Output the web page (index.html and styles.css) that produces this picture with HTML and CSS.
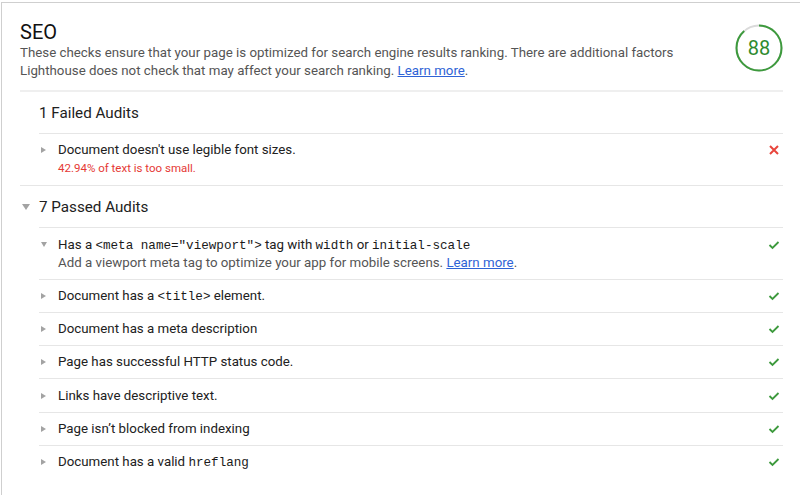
FILE: index.html
```html
<!DOCTYPE html>
<html>
<head>
<meta charset="utf-8">
<link rel="stylesheet" href="styles.css">
</head>
<body>
<div class="frame">
  <section class="category">
    <header class="cat-header">
      <div class="cat-text">
        <h1 class="cat-title">SEO</h1>
        <p class="cat-desc">These checks ensure that your page is optimized for search engine results ranking. There are additional factors Lighthouse does not check that may affect your search ranking. <a class="link" href="#">Learn more</a>.</p>
      </div>
      <div class="gauge">
        <svg class="gauge-svg" width="48" height="48" viewBox="0 0 48 48">
          <circle cx="24" cy="24" r="22.5" fill="none" stroke="#dadada" stroke-width="2"/>
          <circle cx="24" cy="24" r="22.5" fill="none" stroke="#3d9a3d" stroke-width="2" stroke-dasharray="124.4 200" transform="rotate(-90 24 24)"/>
        </svg>
        <span class="gauge-num">88</span>
      </div>
    </header>

    <div class="group">
      <div class="group-head"><span class="arrow-slot"></span><span class="group-title">1 Failed Audits</span></div>
      <div class="audits">
        <div class="audit">
          <span class="arrow-slot"><span class="tri-right"></span></span>
          <div class="audit-body">
            <div class="audit-title">Document doesn't use legible font sizes.</div>
            <div class="audit-fail">42.94% of text is too small.</div>
          </div>
          <svg class="icon" width="12" height="12" viewBox="0 0 12 12"><path d="M2 2 L10 10 M10 2 L2 10" stroke="#e8453c" stroke-width="2" fill="none"/></svg>
        </div>
      </div>
    </div>

    <div class="group">
      <div class="group-head"><span class="arrow-slot head-arrow"><span class="tri-down"></span></span><span class="group-title">7 Passed Audits</span></div>
      <div class="audits">
        <div class="audit">
          <span class="arrow-slot"><span class="tri-down small"></span></span>
          <div class="audit-body">
            <div class="audit-title">Has a <code>&lt;meta name="viewport"&gt;</code> tag with <code>width</code> or <code>initial-scale</code></div>
            <div class="audit-desc">Add a viewport meta tag to optimize your app for mobile screens. <a class="link" href="#">Learn more</a>.</div>
          </div>
          <svg class="icon" width="12" height="12" viewBox="0 0 12 12"><path d="M1.5 6 L4.5 9 L10.5 3" stroke="#3d9a3d" stroke-width="1.8" fill="none"/></svg>
        </div>
        <div class="audit">
          <span class="arrow-slot"><span class="tri-right"></span></span>
          <div class="audit-body"><div class="audit-title">Document has a <code>&lt;title&gt;</code> element.</div></div>
          <svg class="icon" width="12" height="12" viewBox="0 0 12 12"><path d="M1.5 6 L4.5 9 L10.5 3" stroke="#3d9a3d" stroke-width="1.8" fill="none"/></svg>
        </div>
        <div class="audit">
          <span class="arrow-slot"><span class="tri-right"></span></span>
          <div class="audit-body"><div class="audit-title">Document has a meta description</div></div>
          <svg class="icon" width="12" height="12" viewBox="0 0 12 12"><path d="M1.5 6 L4.5 9 L10.5 3" stroke="#3d9a3d" stroke-width="1.8" fill="none"/></svg>
        </div>
        <div class="audit">
          <span class="arrow-slot"><span class="tri-right"></span></span>
          <div class="audit-body"><div class="audit-title">Page has successful HTTP status code.</div></div>
          <svg class="icon" width="12" height="12" viewBox="0 0 12 12"><path d="M1.5 6 L4.5 9 L10.5 3" stroke="#3d9a3d" stroke-width="1.8" fill="none"/></svg>
        </div>
        <div class="audit">
          <span class="arrow-slot"><span class="tri-right"></span></span>
          <div class="audit-body"><div class="audit-title">Links have descriptive text.</div></div>
          <svg class="icon" width="12" height="12" viewBox="0 0 12 12"><path d="M1.5 6 L4.5 9 L10.5 3" stroke="#3d9a3d" stroke-width="1.8" fill="none"/></svg>
        </div>
        <div class="audit">
          <span class="arrow-slot"><span class="tri-right"></span></span>
          <div class="audit-body"><div class="audit-title">Page isn’t blocked from indexing</div></div>
          <svg class="icon" width="12" height="12" viewBox="0 0 12 12"><path d="M1.5 6 L4.5 9 L10.5 3" stroke="#3d9a3d" stroke-width="1.8" fill="none"/></svg>
        </div>
        <div class="audit">
          <span class="arrow-slot"><span class="tri-right"></span></span>
          <div class="audit-body"><div class="audit-title">Document has a valid <code>hreflang</code></div></div>
          <svg class="icon" width="12" height="12" viewBox="0 0 12 12"><path d="M1.5 6 L4.5 9 L10.5 3" stroke="#3d9a3d" stroke-width="1.8" fill="none"/></svg>
        </div>
      </div>
    </div>
  </section>
</div>
</body>
</html>
```
FILE: styles.css
```css
* { box-sizing: border-box; }
html, body { margin: 0; padding: 0; background: #fff; }
body {
  font-family: Roboto, "Liberation Sans", Arial, sans-serif;
  color: #212121;
  width: 800px;
  height: 495px;
  overflow: hidden;
}
.frame {
  margin: 2px 0 0 1px;
  border-top: 1px solid #cfcfcf;
  border-left: 1px solid #cfcfcf;
  height: 493px;
}
.category {
  padding: 17px 17px 0 18px;
}
.cat-header {
  display: flex;
  align-items: flex-start;
  padding-bottom: 10px;
  border-bottom: 2px solid #efefef;
}
.cat-text { flex: 1; padding-right: 40px; }
.cat-title {
  margin: 0;
  font-size: 20px;
  line-height: 24px;
  font-weight: 400;
  color: #111;
}
.cat-desc {
  margin: 0;
  font-size: 13.3px;
  line-height: 18px;
  color: #555;
}
.link { color: #2f63d6; text-decoration: underline; }
.gauge {
  position: relative;
  width: 48px;
  height: 48px;
  margin-top: 4px;
  flex: none;
}
.gauge-svg { display: block; }
.gauge-num {
  position: absolute;
  inset: 0;
  display: flex;
  align-items: center;
  justify-content: center;
  font-size: 20px;
  color: #2e8b2e;
  font-weight: 400;
}
.group + .group { border-top: 1px solid #e6e6e6; }
.group-head {
  display: flex;
  align-items: center;
  height: 41px;
}
.group-title { font-size: 15.2px; line-height: 20px; color: #212121; }
.arrow-slot {
  width: 19px;
  flex: none;
  display: flex;
  align-items: center;
  padding-left: 2px;
  height: 18px;
}
.audits { margin-left: 19px; }
.audit {
  display: flex;
  align-items: flex-start;
  border-top: 1px solid #e6e6e6;
  padding: 7.3px 0 7px 0;
}
.audit-body { flex: 1; }
.audit-title { font-size: 13.3px; line-height: 18px; height: 18px; color: #212121; }
.audit-fail { font-size: 11.5px; line-height: 18px; color: #e53935; padding-bottom: 1px; }
.audit-desc { font-size: 13.3px; line-height: 18px; color: #555; }
code {
  font-family: "Liberation Mono", "DejaVu Sans Mono", monospace;
  font-size: 12.6px;
  line-height: 1;
  color: #1a1a1a;
}
.icon { flex: none; margin: 3px 3px 0 0; }
.tri-right {
  width: 0; height: 0;
  border-top: 3.5px solid transparent;
  border-bottom: 3.5px solid transparent;
  border-left: 5px solid #a3a3a3;
}
.tri-down {
  width: 0; height: 0;
  border-left: 4px solid transparent;
  border-right: 4px solid transparent;
  border-top: 6px solid #a3a3a3;
}
.tri-down.small {
  border-left-width: 3.5px;
  border-right-width: 3.5px;
  border-top-width: 5px;
}
```
